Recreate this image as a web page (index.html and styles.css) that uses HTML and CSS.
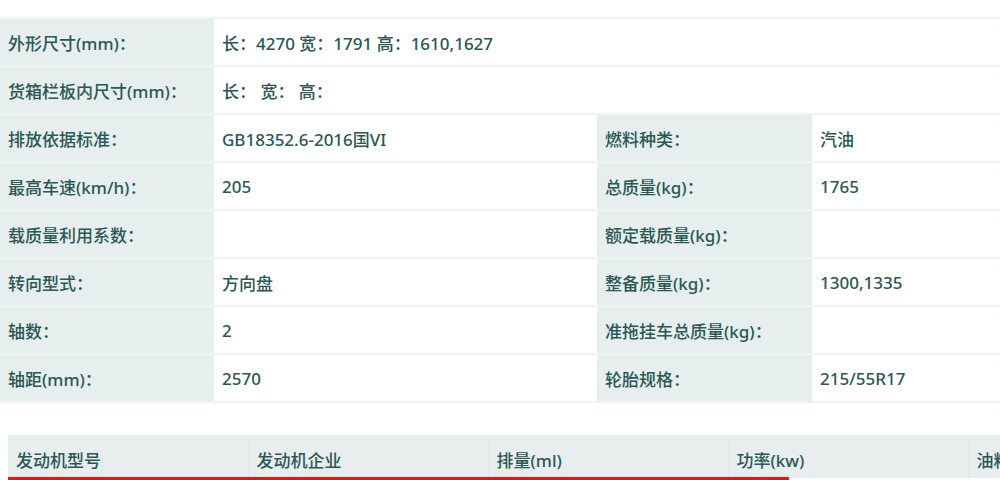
FILE: index.html
```html
<!DOCTYPE html>
<html lang="zh-CN">
<head>
<meta charset="utf-8">
<link rel="stylesheet" href="styles.css">
</head>
<body>
<div class="page">
  <table class="spec">
    <colgroup>
      <col class="c-label"><col class="c-value"><col class="c-label2"><col class="c-value2">
    </colgroup>
    <tr><td class="lbl">外形尺寸(mm)：</td><td colspan="3">长：4270 宽：1791 高：1610,1627</td></tr>
    <tr><td class="lbl">货箱栏板内尺寸(mm)：</td><td colspan="3">长：&nbsp;宽：&nbsp;高：</td></tr>
    <tr><td class="lbl">排放依据标准：</td><td>GB18352.6-2016国VI</td><td class="lbl">燃料种类：</td><td>汽油</td></tr>
    <tr><td class="lbl">最高车速(km/h)：</td><td>205</td><td class="lbl">总质量(kg)：</td><td>1765</td></tr>
    <tr><td class="lbl">载质量利用系数：</td><td></td><td class="lbl">额定载质量(kg)：</td><td></td></tr>
    <tr><td class="lbl">转向型式：</td><td>方向盘</td><td class="lbl">整备质量(kg)：</td><td>1300,1335</td></tr>
    <tr><td class="lbl">轴数：</td><td>2</td><td class="lbl">准拖挂车总质量(kg)：</td><td></td></tr>
    <tr><td class="lbl">轴距(mm)：</td><td>2570</td><td class="lbl">轮胎规格：</td><td>215/55R17</td></tr>
  </table>

  <div class="engine-wrap">
    <table class="engine">
      <colgroup>
        <col class="e-col"><col class="e-col"><col class="e-col"><col class="e-col"><col class="e-col">
      </colgroup>
      <tr>
        <th>发动机型号</th>
        <th>发动机企业</th>
        <th>排量(ml)</th>
        <th>功率(kw)</th>
        <th>油料</th>
      </tr>
    </table>
    <div class="mark"></div>
  </div>
</div>
</body>
</html>
```

FILE: styles.css
```css
html, body {
  margin: 0;
  padding: 0;
  background: #ffffff;
}
body {
  font-family: "Noto Sans", "Noto Sans CJK SC", sans-serif;
  color: #2b5755;
  font-size: 17px;
  font-weight: 500;
}
.page {
  width: 1000px;
  height: 480px;
  overflow: hidden;
  padding-top: 17px;
  box-sizing: border-box;
}
.spec {
  border-collapse: collapse;
  width: 1190px;
  table-layout: fixed;
}
.c-label { width: 214px; }
.c-value { width: 383px; }
.c-label2 { width: 215px; }
.c-value2 { width: 378px; }
.spec td {
  height: 46px;
  padding: 0 0 0 8px;
  border-top: 2px solid #eef3f3;
  border-bottom: 2px solid #eef3f3;
  white-space: nowrap;
  vertical-align: middle;
}
.spec td.lbl {
  background: #e6eeee;
}
.engine-wrap {
  position: relative;
  margin: 32px 0 0 8px;
}
.engine {
  border-collapse: collapse;
  table-layout: fixed;
  width: 1200px;
}
.e-col { width: 240px; }
.engine th {
  height: 38px;
  background: #e8eeee;
  text-align: left;
  font-weight: 500;
  padding: 5px 0 0 8px;
  border-right: 1px solid #dde6e6;
  white-space: nowrap;
  vertical-align: middle;
}
.mark {
  position: absolute;
  left: 0;
  top: 42px;
  width: 781px;
  height: 40px;
  border: 3px solid #f01010;
  box-sizing: border-box;
}
```
